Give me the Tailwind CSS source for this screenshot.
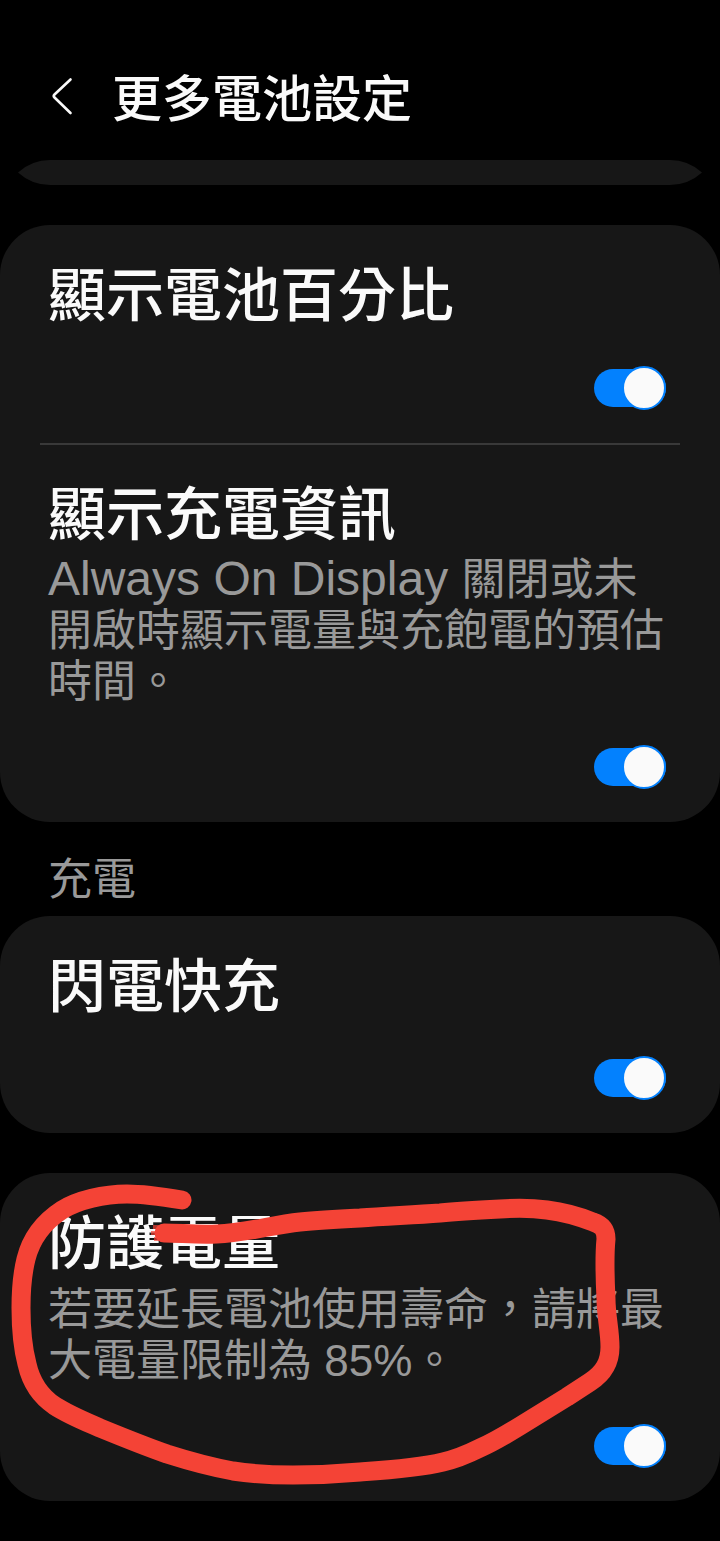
<!DOCTYPE html>
<html lang="zh-Hant">
<head>
<meta charset="utf-8">
<meta name="viewport" content="width=device-width, initial-scale=1">
<title>更多電池設定</title>
<script src="https://cdn.jsdelivr.net/npm/@tailwindcss/browser@4"></script>
</head>
<body class="min-h-screen bg-black pb-10 font-['Liberation_Sans','Noto_Sans_CJK_TC',sans-serif] text-[#fafafa]">
<header class="flex h-40 items-center gap-9 px-12 pt-9">
  <button type="button" aria-label="返回" class="shrink-0 pb-1">
    <svg class="block h-10 w-7" viewBox="0 0 28 40" fill="none" stroke="#fafafa" stroke-width="2.600" stroke-linecap="round" stroke-linejoin="round"><path d="M22.500 3.500L6.500 18.500Q5 20 6.500 21.500L22.500 37"/></svg>
  </button>
  <h1 class="pt-1 text-[50px] leading-[60px] font-medium">更多電池設定</h1>
</header>

<main>
  <div class="mb-10 flex h-[25px] px-[18px]" aria-hidden="true">
    <svg class="h-full w-8" viewBox="0 0 32 25" fill="#171717"><path d="M32 0A48 48 0 0 0 0 12.500A48 48 0 0 0 32 25Z"/></svg>
    <div class="flex-1 bg-[#171717]"></div>
    <svg class="h-full w-8" viewBox="0 0 32 25" fill="#171717"><path d="M0 0A48 48 0 0 1 32 12.500A48 48 0 0 1 0 25Z"/></svg>
  </div>

  <section class="rounded-[50px] bg-[#171717]">
    <div class="px-12 pt-[41px] pb-[33px]">
      <label for="percent" class="block text-[58px] leading-[60px] font-medium">顯示電池百分比</label>
      <div class="mt-10 flex justify-end pr-1.5">
        <input id="percent" type="checkbox" role="switch" checked class="relative h-11 w-[72px] appearance-none before:absolute before:inset-x-0 before:inset-y-[3px] before:rounded-full before:bg-[#0381fe] after:absolute after:top-0 after:right-0 after:size-11 after:rounded-full after:border-2 after:border-[#0381fe] after:bg-[#fafafa]">
      </div>
    </div>
    <hr class="mx-10 border-t-2 border-[#393939]">
    <div class="px-12 pt-10 pb-[33px]">
      <label for="info" class="block text-[58px] leading-[60px] font-medium">顯示充電資訊</label>
      <p class="mt-[9px] text-[44px] leading-[51px] text-[#999999]"><span class="text-[48px] leading-10">Always On Display </span>關閉或未開啟時顯示電量與充飽電的預估時間。</p>
      <div class="mt-[38px] flex justify-end pr-1.5">
        <input id="info" type="checkbox" role="switch" checked class="relative h-11 w-[72px] appearance-none before:absolute before:inset-x-0 before:inset-y-[3px] before:rounded-full before:bg-[#0381fe] after:absolute after:top-0 after:right-0 after:size-11 after:rounded-full after:border-2 after:border-[#0381fe] after:bg-[#fafafa]">
      </div>
    </div>
  </section>

  <h2 class="px-12 pt-8 pb-2.5 text-[44px] leading-[52px] text-[#999999]">充電</h2>

  <section class="rounded-[50px] bg-[#171717] px-12 pt-[41px] pb-[33px]">
    <label for="fast" class="block text-[58px] leading-[60px] font-medium">閃電快充</label>
    <div class="mt-[39px] flex justify-end pr-1.5">
      <input id="fast" type="checkbox" role="switch" checked class="relative h-11 w-[72px] appearance-none before:absolute before:inset-x-0 before:inset-y-[3px] before:rounded-full before:bg-[#0381fe] after:absolute after:top-0 after:right-0 after:size-11 after:rounded-full after:border-2 after:border-[#0381fe] after:bg-[#fafafa]">
    </div>
  </section>

  <section class="relative mt-10 rounded-[50px] bg-[#171717] px-12 pt-[41px] pb-[33px]">
    <label for="protect" class="block text-[58px] leading-[60px] font-medium">防護電量</label>
    <p class="mt-2.5 text-[44px] leading-[51px] text-[#999999]">若要延長電池使用壽命，請將最大電量限制為 85%。</p>
    <div class="mt-[38px] flex justify-end pr-1.5">
      <input id="protect" type="checkbox" role="switch" checked class="relative h-11 w-[72px] appearance-none before:absolute before:inset-x-0 before:inset-y-[3px] before:rounded-full before:bg-[#0381fe] after:absolute after:top-0 after:right-0 after:size-11 after:rounded-full after:border-2 after:border-[#0381fe] after:bg-[#fafafa]">
    </div>
    <!-- hand-drawn red marker loop -->
    <svg class="pointer-events-none absolute top-0 left-0 h-[327px] w-[720px]" viewBox="0 0 720 327" fill="none" stroke="#f44336" stroke-width="19" stroke-linecap="round" stroke-linejoin="round" aria-hidden="true">
      <path d="M182 27C164 24 146 21 127 21C104 21 78 27 62 37C42 50 31 66 26 86C22 102 21 118 21 135C21 155 22 172 27 191C31 209 40 223 55 233C69 242 84 248 100 255C122 264 144 273 167 281C189 288 211 294 233 298C253 301 273 302 293 302C315 302 338 301 360 299C388 297 418 295 443 289C456 286 468 281 480 275C494 269 507 261 520 253L567 224L590 209C604 200 610 189 610 174C610 158 606 142 606 126C605 106 604 86 606 66C606 56 602 52 593 49C578 43 563 39 547 37C532 35 516 35 500 36C480 37 460 38 440 40C413 42 387 43 360 45C340 46 320 47 300 49C272 52 245 60 217 61C197 62 180 60 164 60"/>
      <path d="M153 54L168 54M151 60L168 60M154 66L168 66" stroke-width="4" stroke-opacity="0.700" stroke-linecap="butt"/>
    </svg>
  </section>
</main>
</body>
</html>
